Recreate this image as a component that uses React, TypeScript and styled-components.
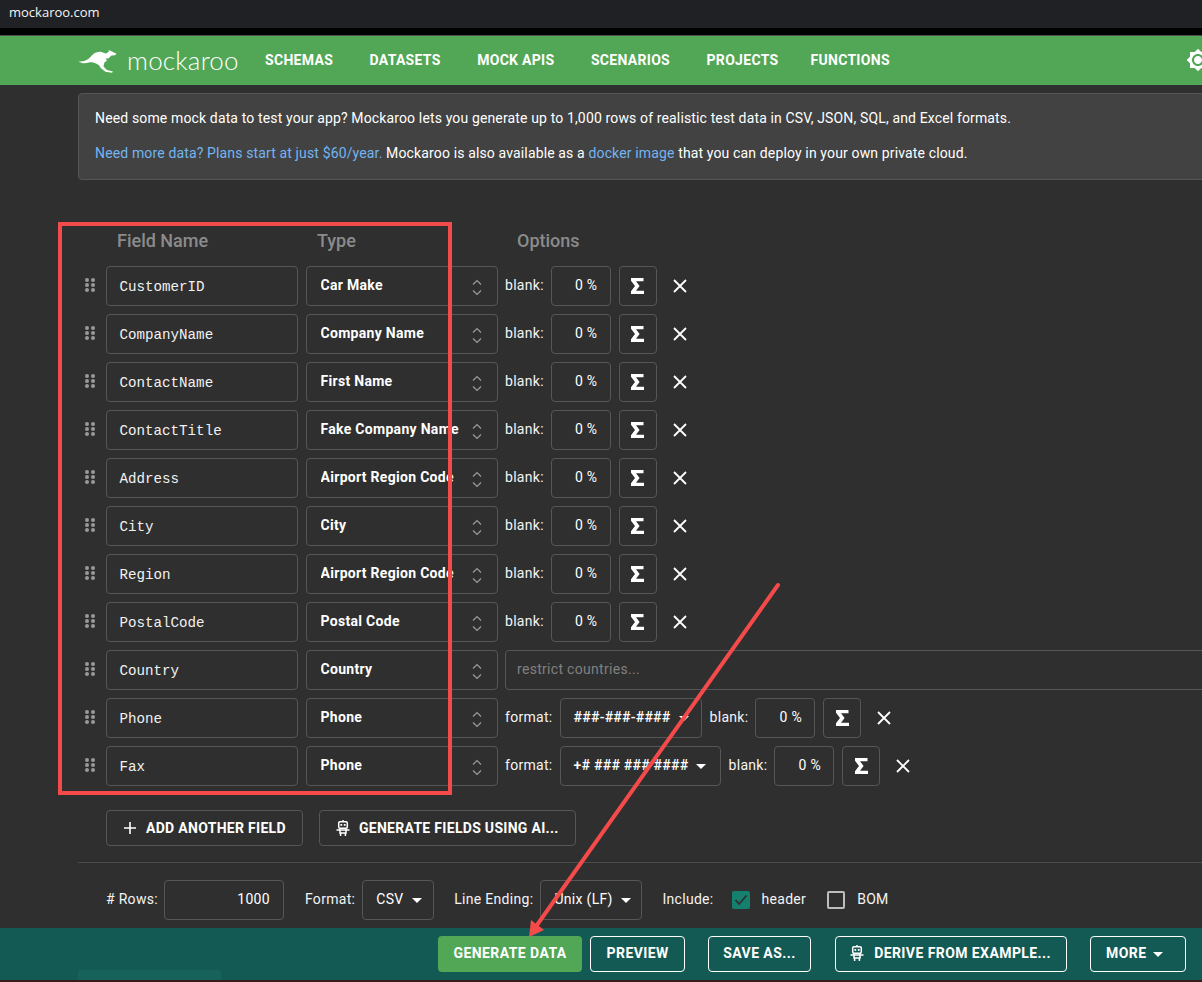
import React from 'react';
import styled, { createGlobalStyle } from 'styled-components';
import { MdBrightnessHigh } from 'react-icons/md';

const GlobalStyle = createGlobalStyle`
  html, body {
    margin: 0;
    padding: 0;
    background: #2f2f2f;
  }
  * {
    box-sizing: border-box;
  }
`;

const Page = styled.div`
  position: relative;
  width: 1202px;
  height: 982px;
  overflow: hidden;
  display: flex;
  flex-direction: column;
  background: #2f2f2f;
  color: #fff;
  font-family: Roboto, "Liberation Sans", sans-serif;
  font-size: 14px;
  letter-spacing: 0.14px;
`;

const UrlBar = styled.div`
  height: 35px;
  flex-shrink: 0;
  padding: 3px 0 0 9px;
  background: #202124;
  border-bottom: 7px solid #000;
  font-family: "Open Sans", "Noto Sans", sans-serif;
  font-size: 13px;
  line-height: 18px;
  letter-spacing: 0;
  color: #f4f4f4;
`;

const Nav = styled.nav`
  height: 50px;
  flex-shrink: 0;
  display: flex;
  align-items: center;
  padding: 0 0 2px 78px;
  background: #51a755;
  border-top: 1px solid #4c4c4c;
`;

const Brand = styled.div`
  width: 187px;
  display: flex;
  align-items: center;
  gap: 9px;
`;

const Wordmark = styled.span`
  font-family: Lato, sans-serif;
  font-weight: 300;
  font-size: 26px;
  line-height: 30px;
  letter-spacing: 0.2px;
  color: #fff;
`;

const NavLink = styled.a`
  margin-right: 36.5px;
  font-weight: 700;
  font-size: 14px;
  letter-spacing: 0.3px;
  color: #fff;

  &:nth-of-type(5) {
    margin-right: 32px;
  }
`;

const GearWrap = styled.div`
  margin-left: auto;
  margin-right: -8px;
  display: flex;
  color: #fff;
`;

const Main = styled.main`
  flex: 1;
  min-height: 0;
  padding: 8px 0 0 78px;
`;

const Notice = styled.div`
  width: 1180px;
  height: 87px;
  padding: 14px 16px;
  background: #424242;
  border: 1px solid #555;
  border-radius: 4px;
  line-height: 20px;
`;

const NoticeLine = styled.p`
  margin: 0 0 15px;
`;

const TextLink = styled.a`
  color: #72b5f2;
`;

const Headers = styled.div`
  display: flex;
  height: 32px;
  margin-top: 44px;
  padding-left: 39px;
  align-items: center;
`;

const HeaderCell = styled.div`
  width: 200px;
  font-weight: 500;
  font-size: 18px;
  letter-spacing: 0;
  color: #8b8b8b;
`;

const Rows = styled.div`
  display: flex;
  flex-direction: column;
  gap: 8px;
  margin-top: 10px;
`;

const Row = styled.div`
  display: flex;
  align-items: center;
  height: 40px;
`;

const Grip = styled.svg`
  width: 28px;
  height: 20px;
  flex-shrink: 0;
  margin-top: -2px;
`;

const boxBorder = `
  border: 1px solid #565656;
  border-radius: 4px;
`;

const NameInput = styled.div`
  ${boxBorder}
  width: 192px;
  height: 40px;
  margin-right: 8px;
  padding: 1px 0 0 12.5px;
  display: flex;
  align-items: center;
  font-family: "Liberation Mono", monospace;
  font-size: 14.2px;
  letter-spacing: 0;
  color: #f2f2f2;
`;

const TypeSelect = styled.div`
  ${boxBorder}
  position: relative;
  width: 192px;
  height: 40px;
  margin-right: 7px;
  padding-left: 13.5px;
  display: flex;
  align-items: center;
  font-weight: 700;
  font-size: 14px;
  letter-spacing: 0.3px;
`;

const TypeText = styled.span`
  width: 141px;
  overflow: hidden;
  white-space: nowrap;
  margin-top: -2px;
`;

const Chevrons = styled.svg`
  position: absolute;
  right: 14px;
  top: 12px;
  width: 12px;
  height: 18px;
`;

const Label = styled.span<{ $gap?: number }>`
  margin-right: ${(p) => p.$gap ?? 7}px;
  margin-bottom: 2px;
  font-size: 14px;
  letter-spacing: 0.3px;
  color: #f4f4f4;
`;

const PercentBox = styled.div`
  ${boxBorder}
  width: 60px;
  height: 40px;
  margin-right: 8px;
  padding: 0 0 2px 23px;
  display: flex;
  align-items: center;
  letter-spacing: 0.3px;
`;

const IconBox = styled.div`
  ${boxBorder}
  width: 38px;
  height: 40px;
  display: flex;
  align-items: center;
  justify-content: center;
`;

const Remove = styled.svg`
  width: 16px;
  height: 16px;
  margin-left: 15px;
`;

const RestrictInput = styled.div`
  ${boxBorder}
  flex: 1;
  height: 40px;
  margin-right: -40px;
  padding: 0 0 2px 11px;
  display: flex;
  align-items: center;
  letter-spacing: 0.3px;
  color: #808080;
`;

const FormatSelect = styled.div<{ $width: number }>`
  ${boxBorder}
  width: ${(p) => p.$width}px;
  height: 40px;
  margin-right: 8px;
  padding: 0 0 2px 13px;
  display: flex;
  align-items: center;
  font-weight: 500;
  letter-spacing: 0.25px;
  white-space: nowrap;
`;

const Caret = styled.i<{ $gap?: number; $after?: number }>`
  display: inline-block;
  margin-left: ${(p) => p.$gap ?? 8}px;
  margin-right: ${(p) => p.$after ?? 0}px;
  margin-top: 2px;
  border-left: 5px solid transparent;
  border-right: 5px solid transparent;
  border-top: 5px solid currentColor;
`;

const ActionRow = styled.div`
  display: flex;
  gap: 16px;
  margin: 24px 0 0 28px;
`;

const OutlineButton = styled.button`
  height: 36px;
  padding: 0 16px 1px;
  display: flex;
  align-items: center;
  gap: 9px;
  background: transparent;
  border: 1px solid #565656;
  border-radius: 4px;
  color: #fff;
  font-family: inherit;
  font-weight: 700;
  font-size: 14px;
  letter-spacing: 0.3px;
  white-space: nowrap;
`;

const Divider = styled.hr`
  margin: 16px 0 17px;
  border: 0;
  border-top: 1px solid #4b4b4b;
`;

const Controls = styled.div`
  display: flex;
  align-items: center;
  height: 40px;
  margin-left: 28px;
`;

const RowsInput = styled.div`
  ${boxBorder}
  width: 120px;
  height: 40px;
  margin-right: 21px;
  padding: 0 13px 2px 0;
  display: flex;
  align-items: center;
  justify-content: flex-end;
  letter-spacing: 0.3px;
`;

const SmallSelect = styled.div<{ $width: number }>`
  ${boxBorder}
  width: ${(p) => p.$width}px;
  height: 40px;
  margin-right: 20px;
  padding: 0 0 2px 13px;
  display: flex;
  align-items: center;
  letter-spacing: 0.3px;
  white-space: nowrap;
`;

const Check = styled.span<{ $on?: boolean }>`
  width: 18px;
  height: 18px;
  margin-right: 12px;
  display: flex;
  align-items: center;
  justify-content: center;
  border-radius: 2px;
  background: ${(p) => (p.$on ? '#16806f' : 'transparent')};
  border: ${(p) => (p.$on ? '0' : '2px solid #bdbdbd')};
`;

const BottomBar = styled.footer`
  position: relative;
  height: 54px;
  flex-shrink: 0;
  display: flex;
  align-items: flex-start;
  padding: 8px 0 0 438px;
  background: #145a54;
  border-bottom: 2px solid #3a1a1d;
`;

const FollowGhost = styled.div`
  position: absolute;
  left: 78px;
  bottom: 0;
  width: 143px;
  height: 10px;
  border-radius: 3px 3px 0 0;
  background: #18625c;
`;

const BarButton = styled.button<{ $primary?: boolean; $gap?: number; $pad?: number }>`
  height: 36px;
  margin-right: ${(p) => p.$gap ?? 8}px;
  padding: 0 ${(p) => p.$pad ?? 15.5}px 2px;
  display: flex;
  align-items: center;
  gap: 10px;
  border-radius: 4px;
  border: ${(p) => (p.$primary ? '0' : '1px solid #fff')};
  background: ${(p) => (p.$primary ? '#51a755' : 'transparent')};
  color: #fff;
  font-family: inherit;
  font-weight: 700;
  font-size: 14px;
  letter-spacing: 0.42px;
  white-space: nowrap;
`;

const RedFrame = styled.div`
  position: absolute;
  left: 58px;
  top: 222px;
  width: 394px;
  height: 573px;
  border: 4px solid #f44a4a;
  pointer-events: none;
`;

const ArrowLayer = styled.svg`
  position: absolute;
  left: 0;
  top: 0;
  pointer-events: none;
`;

function GripIcon() {
  return (
    <Grip viewBox="0 0 28 20">
      {[5, 10, 15].flatMap((y) =>
        [9, 15].map((x) => <circle key={`${x}-${y}`} cx={x} cy={y} r={2} fill="#9a9a9a" />),
      )}
    </Grip>
  );
}

function SigmaIcon() {
  return (
    <svg width="13" height="16" viewBox="0 0 13 16">
      <path d="M0 0H12.5V3.3H5L8.6 8 5 12.7H13V16H0V13.2L4 8 0 2.8Z" fill="#fff" />
    </svg>
  );
}

function RobotIcon() {
  return (
    <svg width="14" height="16" viewBox="0 0 14 16" fill="none" stroke="#fff" strokeWidth="1.5">
      <path d="M7 0v2" />
      <rect x="2.7" y="1.8" width="8.6" height="6.4" rx="1.2" />
      <path d="M0.5 10H13.5M4 8.5v4.5h6V8.5M4.6 13V16M9.4 13V16" />
      <rect x="4.4" y="4" width="1.8" height="1.8" fill="#fff" stroke="none" />
      <rect x="7.8" y="4" width="1.8" height="1.8" fill="#fff" stroke="none" />
    </svg>
  );
}

function KangarooLogo() {
  return (
    <svg width="40" height="26" viewBox="0 0 40 26">
      <path
        fill="#fff"
        d="M0.5 14.5C5 15 9 13.5 12 10.5 15 6.5 19 4 23.5 5 25.5 5.6 27 6.6 28 6.5L31 4.5 30.5 3 33 4 38.5 6.8 37 8.3 33.5 8.6C32 10 31 11 30.2 11.5L27.5 11.6 29 13.5 26.5 15.5 26 17 25.5 19.5 29 23 35 24.5 34 25.8 27.5 24.7 22.7 21C21.5 18.5 20 17.5 18 16.6 15 15.4 13 15 10.8 15.6 7.5 16.5 3.5 16.8 0.5 14.5Z"
      />
    </svg>
  );
}

interface IField {
  name: string;
  type: string;
  options?: 'restrict' | { format: string; width: number };
}

const FIELDS: IField[] = [
  { name: 'CustomerID', type: 'Car Make' },
  { name: 'CompanyName', type: 'Company Name' },
  { name: 'ContactName', type: 'First Name' },
  { name: 'ContactTitle', type: 'Fake Company Name' },
  { name: 'Address', type: 'Airport Region Code' },
  { name: 'City', type: 'City' },
  { name: 'Region', type: 'Airport Region Code' },
  { name: 'PostalCode', type: 'Postal Code' },
  { name: 'Country', type: 'Country', options: 'restrict' },
  { name: 'Phone', type: 'Phone', options: { format: '###-###-####', width: 142 } },
  { name: 'Fax', type: 'Phone', options: { format: '+# ### ### ####', width: 161 } },
];

const NAV_ITEMS = ['SCHEMAS', 'DATASETS', 'MOCK APIS', 'SCENARIOS', 'PROJECTS', 'FUNCTIONS'];

function BlankControls() {
  return (
    <>
      <Label>blank:</Label>
      <PercentBox>0 %</PercentBox>
      <IconBox>
        <SigmaIcon />
      </IconBox>
      <Remove viewBox="0 0 16 16">
        <path d="M2 2L14 14M14 2L2 14" stroke="#fff" strokeWidth="1.8" />
      </Remove>
    </>
  );
}

function FieldRow({ field }: { field: IField }) {
  const { options } = field;
  return (
    <Row>
      <GripIcon />
      <NameInput>{field.name}</NameInput>
      <TypeSelect>
        <TypeText>{field.type}</TypeText>
        <Chevrons viewBox="0 0 12 18">
          <path d="M2 5.5L6 1.5 10 5.5M2 11.5L6 15.5 10 11.5" fill="none" stroke="#9a9a9a" strokeWidth="1.2" />
        </Chevrons>
      </TypeSelect>
      {options === 'restrict' && <RestrictInput>restrict countries...</RestrictInput>}
      {options && options !== 'restrict' && (
        <>
          <Label $gap={7}>format:</Label>
          <FormatSelect $width={options.width}>
            {options.format}
            <Caret />
          </FormatSelect>
        </>
      )}
      {options !== 'restrict' && <BlankControls />}
    </Row>
  );
}

export default function App() {
  return (
    <Page>
      <GlobalStyle />
      <UrlBar>mockaroo.com</UrlBar>
      <Nav>
        <Brand>
          <KangarooLogo />
          <Wordmark>mockaroo</Wordmark>
        </Brand>
        {NAV_ITEMS.map((item) => (
          <NavLink key={item}>{item}</NavLink>
        ))}
        <GearWrap>
          <MdBrightnessHigh size={24} />
        </GearWrap>
      </Nav>
      <Main>
        <Notice>
          <NoticeLine>
            Need some mock data to test your app? Mockaroo lets you generate up to 1,000 rows of realistic test data in
            CSV, JSON, SQL, and Excel formats.
          </NoticeLine>
          <NoticeLine>
            <TextLink>Need more data? Plans start at just $60/year.</TextLink> Mockaroo is also available as a{' '}
            <TextLink>docker image</TextLink> that you can deploy in your own private cloud.
          </NoticeLine>
        </Notice>
        <Headers>
          <HeaderCell>Field Name</HeaderCell>
          <HeaderCell>Type</HeaderCell>
          <HeaderCell>Options</HeaderCell>
        </Headers>
        <Rows>
          {FIELDS.map((field) => (
            <FieldRow key={field.name} field={field} />
          ))}
        </Rows>
        <ActionRow>
          <OutlineButton>
            <svg width="14" height="14" viewBox="0 0 14 14">
              <path d="M7 1V13M1 7H13" stroke="#fff" strokeWidth="1.6" />
            </svg>
            ADD ANOTHER FIELD
          </OutlineButton>
          <OutlineButton>
            <RobotIcon />
            GENERATE FIELDS USING AI...
          </OutlineButton>
        </ActionRow>
        <Divider />
        <Controls>
          <Label $gap={6}># Rows:</Label>
          <RowsInput>1000</RowsInput>
          <Label>Format:</Label>
          <SmallSelect $width={72}>
            CSV
            <Caret />
          </SmallSelect>
          <Label>Line Ending:</Label>
          <SmallSelect $width={102}>
            Unix (LF)
            <Caret />
          </SmallSelect>
          <Label $gap={18}>Include:</Label>
          <Check $on>
            <svg width="14" height="12" viewBox="0 0 14 12">
              <path d="M1.5 6L5.2 10 12.5 1.5" fill="none" stroke="#2f2f2f" strokeWidth="1.8" />
            </svg>
          </Check>
          <Label $gap={21}>header</Label>
          <Check />
          <Label>BOM</Label>
        </Controls>
      </Main>
      <BottomBar>
        <FollowGhost />
        <BarButton $primary>GENERATE DATA</BarButton>
        <BarButton $gap={23}>PREVIEW</BarButton>
        <BarButton $gap={24} $pad={14}>SAVE AS...</BarButton>
        <BarButton $gap={23} $pad={14.5}>
          <RobotIcon />
          DERIVE FROM EXAMPLE...
        </BarButton>
        <BarButton>
          MORE
          <Caret $gap={-4} $after={7} />
        </BarButton>
      </BottomBar>
      <RedFrame />
      <ArrowLayer width="1202" height="982" viewBox="0 0 1202 982">
        <path d="M778 585L537 925" stroke="#f44a4a" strokeWidth="4" strokeLinecap="round" />
        <path d="M529 937L531 920 544 930Z" fill="#f44a4a" />
      </ArrowLayer>
    </Page>
  );
}
